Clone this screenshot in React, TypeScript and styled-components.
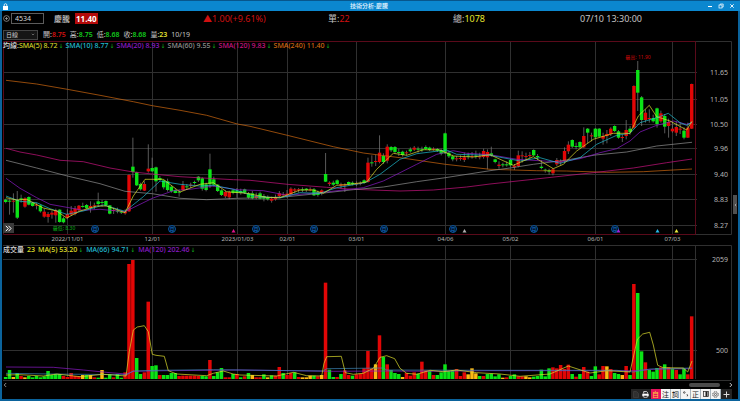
import React from 'react';
import styled, { createGlobalStyle } from 'styled-components';

const GlobalStyle = createGlobalStyle`
  * { box-sizing: border-box; }
  body { margin: 0; background: #000; }
  button, input, select { font: inherit; color: inherit; margin: 0; padding: 0; border: 0; background: none; }
`;

const colors = {
  up: '#e20606',
  down: '#0be416',
  flat: '#fdb813',
  wick: '#808080',
  grid: '#303030',
  frame: '#5a0a1a',
  yellow: '#e0e02c',
  cyan: '#20bcd0',
  purple: '#8d1bc9',
  gray: '#909090',
  pink: '#c81480',
  orange: '#d06810',
};

const Window = styled.main`
  display: flex;
  flex-direction: column;
  background: #000;
  border: 2px solid #0b639c;
  border-top: 1px solid #07568c;
  color: #c4c4c4;
  font: 7px/10px "Noto Sans", "Noto Sans CJK TC", sans-serif;
`;

const TitleBar = styled.header`
  display: grid;
  grid-template-columns: 1fr auto 1fr;
  align-items: center;
  height: 10px;
  margin: 0 -2px;
  padding: 0 5px 0 3px;
  background: #0b87cf;
  color: #e8f6ff;
  svg { display: block; }
`;

const Title = styled.h1`
  margin: 0;
  font-size: 6px;
  line-height: 10px;
  font-weight: 500;
`;

const WindowButtons = styled.div`
  display: flex;
  justify-content: flex-end;
  gap: 5px;
`;

const QuoteBar = styled.section`
  display: grid;
  grid-template-columns: 201fr 125fr 125fr 127fr 158fr;
  align-items: center;
  height: 15px;
  font-size: 9px;
  line-height: 12px;
  white-space: nowrap;
`;

const Symbol = styled.div`
  display: flex;
  align-items: center;
  padding-left: 1px;
`;

const IconButton = styled.button`
  display: grid;
  place-items: center;
  svg { display: block; }
`;

const CodeInput = styled.input`
  && {
    width: 33px;
    height: 11px;
    margin: 0 10px 0 1px;
    padding: 0 3px;
    border: 1px solid #5c5c5c;
    font-size: 7px;
    color: #d8d8d8;
  }
`;

const StockName = styled.span`
  font-size: 8px;
  font-weight: 500;
  margin-right: 5px;
`;

const LastPrice = styled.strong`
  padding: 0 1px;
  font-size: 8px;
  line-height: 11px;
  color: #fff;
  background: #b40a0a;
`;

const Value = styled.span<{ $color: string; $strong?: boolean }>`
  color: ${(p) => p.$color};
  font-weight: ${(p) => (p.$strong ? 600 : 400)};
`;

const DailyBar = styled.section`
  display: flex;
  align-items: center;
  gap: 4px;
  height: 15px;
  padding: 2px 1px 0;
  white-space: nowrap;
`;

const PeriodBox = styled.label`
  display: flex;
  align-items: center;
  width: 35px;
  height: 10px;
  margin-right: 1px;
  border: 1px solid #444;
  background: #151515;
  padding-right: 2px;
`;

const PeriodSelect = styled.select`
  && {
    flex: 1;
    appearance: none;
    padding-left: 2px;
    font-size: 6px;
    line-height: 8px;
    color: #ccc;
  }
`;

const Panel = styled.section`
  position: relative;
`;

const Plot = styled.svg`
  display: block;
  width: 100%;
  height: auto;
  font-family: "Noto Sans", "Noto Sans CJK TC", sans-serif;
`;

const Legend = styled.div<{ $gap: number }>`
  position: absolute;
  top: 0;
  left: 1px;
  display: flex;
  gap: ${(p) => p.$gap}px;
  line-height: 9px;
  font-weight: 500;
  white-space: nowrap;
`;

const LegendItem = styled.span<{ $color: string }>`
  color: ${(p) => p.$color};
`;

const Arrow = styled.span`
  color: #10b41c;
  margin-left: 1px;
  font-family: "DejaVu Sans", sans-serif;
  font-size: 6px;
`;

const ExpandButton = styled.button`
  && {
    position: absolute;
    left: 1px;
    bottom: 12px;
    width: 11px;
    height: 10px;
    display: grid;
    place-items: center;
    background: #3a3a3a;
    color: #fff;
  }
`;

const SideHandle = styled.button`
  && {
    position: absolute;
    right: 1px;
    top: 154px;
    width: 4px;
    height: 19px;
    background: #505050;
    color: #bbb;
    display: grid;
    place-items: center;
  }
`;

const ScrollRow = styled.div`
  display: flex;
  align-items: center;
  justify-content: space-between;
  height: 8px;
  padding: 0 5px 0 1px;
  color: #c0c0c0;
`;

const Track = styled.div`
  flex: 1;
  display: flex;
  justify-content: flex-end;
  padding-right: 9px;
`;

const Thumb = styled.div`
  width: 31px;
  height: 4px;
  border-radius: 2px;
  background: #4b4b4b;
`;

const Tools = styled.nav`
  display: flex;
  justify-content: flex-end;
  height: 10px;
  padding-right: 6px;
`;

const Tool = styled.button<{ $bg: string; $fg: string }>`
  && {
    display: grid;
    place-items: center;
    width: 10px;
    height: 10px;
    font-size: 7px;
    line-height: 9px;
    color: ${(p) => p.$fg};
    background: ${(p) => p.$bg};
    border-right: 1px solid ${(p) => (p.$bg === '#f4f4f4' ? '#a8b4bc' : p.$bg)};
    &:last-child { width: 11px; }
  }
  svg { display: block; }
`;

/* Chart data is kept in units of one third of a drawing unit. */
const U = 3;
const STEP = 11.562;
const px = (i: number) => (17.1 + STEP * i) / U;

const PRICE_TOP = 56;
const VOLUME_TOP = 240;
const VOLUME_BASE = 379;

/* direction, high, body top, body bottom, low */
const candles = `
g428,431,438,442 g430,434,437,476 r412,434,437,470 g405,432,485,489 g416,427,431,440 r424,427,452,455 g421,423,446,448 g438,441,450,452
r440,446,448,460 g446,448,466,470 r458,467,482,485 r468,474,483,500 r464,470,476,488 r458,462,478,500 g460,461,498,500 g482,487,499,502
r460,474,485,490 r450,464,476,480 r450,458,474,478 r447,449,463,466 g440,450,453,455 g444,447,457,459 r436,450,456,470 r440,448,450,460
g410,436,444,452 g432,438,440,452 g433,435,448,450 g447,448,473,475 r455,462,465,474 g455,464,467,472 g463,467,470,474 r460,466,472,476
r355,357,466,468 g245,332,348,365 g347,349,388,390 g380,384,400,404 r376,384,404,405 r265,338,346,350 g305,336,346,348 g332,334,376,407
g360,366,372,374 g371,373,394,400 g368,376,402,407 g388,392,406,410 g398,402,411,412 g400,407,410,422 r375,388,402,404 g384,391,394,402
r380,386,388,396 g374,378,381,386 g360,362,373,378 g364,367,398,404 g380,385,402,406 g293,340,385,396 g362,370,386,392 g384,386,405,408
g400,403,417,420 r404,408,421,426 r404,408,424,430 g400,403,411,415 g396,404,411,425 g398,405,411,416 g398,400,410,414 g408,412,425,428
g405,412,427,430 r410,420,426,430 g407,412,428,430 g414,420,428,436 g418,423,430,434 r422,428,434,440 r416,423,430,434 r405,412,420,424
r408,415,418,422 r402,413,418,425 r394,398,415,418 r396,400,404,412 r396,400,402,410 g394,400,402,408 g396,398,402,408 r394,400,402,406
g396,400,418,420 g404,408,417,422 r400,403,410,418 g291,354,377,378 r376,380,384,390 g374,380,386,390 g370,373,384,386 r380,385,389,398
r382,386,388,408 g376,378,385,388 g376,380,385,388 r376,382,384,390 r376,381,383,388 g370,373,380,383 r305,320,378,380 g298,319,321,332
r296,315,318,330 r238,290,318,322 g292,300,318,324 r265,272,314,322 g270,273,283,288 g270,273,288,292 g278,288,291,300 g284,287,297,302
r284,289,292,298 g274,280,286,290 r270,275,281,285 g272,278,280,290 g272,280,282,288 g268,273,279,282 g272,275,282,285 r274,278,281,284
g276,279,284,288 g278,282,293,298 g230,232,292,294 g286,290,301,306 g296,301,310,316 r300,307,310,316 r298,306,308,314 r290,304,312,318
g290,299,302,310 r288,300,303,308 g284,299,302,308 r290,301,303,310 r278,285,303,308 r280,288,304,340 g272,292,298,302 g308,310,318,322
r316,326,330,338 g320,325,328,334 g316,325,327,332 g308,312,328,332 r324,329,334,342 r284,298,330,334 r286,298,300,320 r290,300,302,314
r288,297,300,306 g280,282,298,300 g294,300,304,312 g312,332,336,340 g338,341,344,350 g338,342,347,356 r336,340,352,358 r306,312,325,330
r310,316,319,328 r274,285,315,322 r256,266,286,294 g250,252,272,276 g260,270,273,280 g256,258,274,278 r214,240,274,276 g216,218,230,262
r230,238,241,256 g216,218,244,248 g216,218,242,244 r230,240,248,266 r222,234,240,262 r214,218,234,240 g208,210,225,228 g222,226,245,248
r236,243,245,258 r192,222,240,250 g210,218,228,236 r88,90,215,218 g15,42,110,165 g120,124,192,210 r160,170,192,200 r160,186,188,200
g176,186,196,200 g155,157,204,215 r164,172,196,200 g174,180,212,232 r188,198,210,245 r198,218,226,230 r196,213,230,240 r200,218,220,234
g214,224,245,250 r200,215,245,246 r83,84,218,219`
  .trim()
  .split(/\s+/)
  .map((s) => {
    const [high, top, bottom, low] = s.slice(1).split(',').map(Number);
    return { up: s[0] === 'r', high, top, bottom, low };
  });

/* direction followed by bar height */
const volumes = `
g6 g27 y6 g18 r9 y5 g9 g5 g9 g5 g8 g24 g12 g15 g15 r9 r6 r18 r9 r8 y12 g12 y12 r5 g4 y27 g4 g15 r5 g15 g4 r20
r345 r357 g63 g15 r20 r232 g39 g41 r12 g12 g12 g18 g18 r9 r10 r10 r10 r10 r9 g9 g8 r57 g9 g20 g33 r5 r5 g15 r15 g5 r8 g18
y12 r5 r5 g14 y5 g11 r10 r36 g18 r12 r18 g20 r6 y5 y5 y10 g10 r8 y12 r289 g28 g6 r6 g15 r26 r12 g10 r14 r16 r32 r84 r32
y44 r131 g66 r44 g27 g18 g15 y6 r18 r10 r20 g16 r52 r26 g24 r12 g12 g20 g44 g24 g26 r30 r9 r20 y14 y32 y17 g9 r9 g15 g16 g8
g14 y4 r5 g9 g14 r8 r8 y8 y5 g7 g9 g28 g8 g32 r35 r32 r42 r30 r43 g15 r7 g15 r36 r22 g9 g38 r14 r39 y38 r30 g18 g15
y12 r39 g12 r285 g258 g83 r50 g27 g22 g33 r35 g44 r35 g30 r27 g14 g32 r14 r188`
  .trim()
  .split(/\s+/)
  .map((s) => ({ kind: s[0], size: Number(s.slice(1)) }));

const volumeColor: Record<string, string> = { r: colors.up, g: colors.down, y: colors.flat };

const priceLines = [
  { color: colors.orange, pts: '18,73 110,84 202,100 300,118 400,137 457,149 540,163 620,178 712,204 750,211 862,238 1000,272 1090,291 1200,305 1336,325 1470,340 1610,344 1700,345 1820,349 1930,347 2020,342 2076,339' },
  { color: colors.pink, pts: '18,277 60,288 110,297 180,313 250,317 330,336 400,348 457,354 540,362 700,371 750,373 862,385 980,394 1060,400 1200,405 1300,402 1400,393 1470,384 1600,370 1790,349 1900,336 2000,320 2076,309' },
  { color: colors.gray, pts: '18,313 110,336 202,360 300,383 375,406 457,413 540,427 620,431 712,427 800,425 862,422 980,410 1060,401 1150,393 1250,377 1336,365 1470,344 1530,336 1600,325 1700,312 1786,297 1880,288 1970,270 2076,259' },
  { color: colors.purple, pts: '18,367 60,397 110,425 150,445 250,463 300,460 375,467 457,427 520,404 570,400 640,390 712,401 790,404 862,418 960,410 1090,395 1150,375 1200,350 1250,325 1310,295 1360,284 1400,292 1470,296 1550,310 1680,318 1740,308 1800,290 1850,278 1890,255 1920,228 1970,208 2020,195 2060,205 2076,200' },
  { color: colors.cyan, pts: '18,420 60,436 110,440 150,458 200,475 250,465 310,447 375,466 430,422 480,375 540,385 600,390 640,388 700,400 760,420 840,426 900,410 960,412 1010,395 1095,380 1140,355 1200,310 1250,293 1340,282 1370,295 1470,298 1560,315 1620,305 1680,322 1740,305 1790,265 1850,238 1890,232 1920,200 1970,185 2005,172 2040,200 2060,208 2076,198' },
  { color: colors.yellow, pts: '18,425 50,432 80,430 130,456 170,465 200,486 240,465 290,450 320,450 375,470 400,420 435,370 490,370 540,408 600,385 640,380 680,407 740,412 800,424 840,425 900,402 940,402 970,412 1010,388 1050,385 1100,378 1130,340 1180,292 1220,298 1270,281 1320,282 1360,300 1420,303 1470,296 1540,328 1600,302 1660,338 1690,325 1730,285 1780,250 1840,232 1890,232 1915,180 1948,148 1970,182 2010,195 2060,222 2076,196' },
];

const volumeLines = [
  { color: colors.purple, pts: '18,381 160,382 250,390 330,398 380,402 400,394 500,392 720,390 1000,394 1150,393 1300,394 1470,392 1900,392 1960,388 2076,386' },
  { color: '#3d86b8', pts: '18,400 150,402 380,404 400,393 470,391 640,389 720,390 970,393 980,386 1150,384 1160,390 1470,391 1850,391 1900,396 1950,387 2076,384' },
  { color: colors.yellow, pts: '18,405 60,404 130,408 170,402 240,410 310,403 378,408 388,335 400,270 412,261 433,257 445,275 457,343 468,346 493,349 505,392 530,402 620,407 640,400 670,393 700,402 720,405 830,408 880,397 920,407 965,408 972,370 980,350 1024,349 1036,398 1060,403 1090,400 1120,385 1140,352 1160,347 1184,356 1200,385 1220,400 1250,403 1290,391 1330,395 1370,390 1430,398 1500,402 1560,409 1650,402 1705,378 1770,399 1820,392 1890,396 1912,298 1928,282 1949,277 1960,315 1973,376 1990,383 2050,384 2063,396 2076,363' },
];

const toPoints = (pts: string, top: number) =>
  pts
    .split(' ')
    .map((p) => {
      const [x, y] = p.split(',').map(Number);
      return `${(x / U).toFixed(1)},${(top + y / U).toFixed(1)}`;
    })
    .join(' ');

const dates = [
  { x: 67.5, text: '2022/11/01' },
  { x: 152.5, text: '12/01' },
  { x: 237.5, text: '2023/01/03' },
  { x: 287.5, text: '02/01' },
  { x: 356.5, text: '03/01' },
  { x: 445.5, text: '04/06' },
  { x: 510.5, text: '05/02' },
  { x: 595.5, text: '06/01' },
  { x: 672.5, text: '07/03' },
];

const prices = [
  { y: 72.5, text: '11.65' },
  { y: 99.5, text: '11.05' },
  { y: 124.5, text: '10.50' },
  { y: 148.5, text: '9.96' },
  { y: 174.5, text: '9.40' },
  { y: 199.5, text: '8.83' },
  { y: 225.5, text: '8.27' },
];

const months = [95, 172, 256, 314, 384, 453, 534, 615];
const flags = [
  { x: 233.5, color: '#e0148c' },
  { x: 464.5, color: '#b0b0b0' },
  { x: 618.5, color: '#a020e0' },
  { x: 657.5, color: '#28b8e8' },
  { x: 676.5, color: '#e8e83c' },
];

function PriceChart() {
  return (
    <Plot viewBox="2 41 736 204" role="img" aria-label="日線 K線圖">
      <g stroke={colors.grid} fill="none">
        {dates.map((d) => <path key={d.text} d={`M${d.x} 41V234`} />)}
        {prices.map((p) => <path key={p.text} d={`M3 ${p.y}H697`} />)}
        <path d="M695 41.5H731.5V234.5H695" />
      </g>
      <path d="M3.5 41.5H695.5V234.5H3.5Z" stroke={colors.frame} fill="none" />
      {months.map((x) => (
        <g key={x}>
          <circle cx={x} cy={229} r={3.5} fill="#001226" stroke="#0a559c" />
          <text x={x} y={231} fontSize={5} textAnchor="middle" fill="#1677d2">月</text>
        </g>
      ))}
      {flags.map((f) => <path key={f.x} d={`M${f.x - 2} 232.5h4l-2 -3.5z`} fill={f.color} />)}
      {candles.map((c, i) => (
        <g key={i}>
          <path d={`M${px(i)} ${PRICE_TOP + c.high / U}V${PRICE_TOP + c.low / U}`} stroke={colors.wick} strokeWidth={0.7} />
          <rect
            x={px(i) - 1.7}
            y={PRICE_TOP + c.top / U}
            width={3.4}
            height={Math.max(1, (c.bottom - c.top) / U)}
            fill={c.up ? colors.up : colors.down}
          />
        </g>
      ))}
      {priceLines.map((l) => (
        <polyline key={l.color} points={toPoints(l.pts, PRICE_TOP)} fill="none" stroke={l.color} strokeWidth={0.7} strokeLinejoin="round" />
      ))}
      <text x={638} y={59} fontSize={5} textAnchor="middle" fill="#c80808">最高: 11.90</text>
      <text x={64} y={229.5} fontSize={5} textAnchor="middle" fill="#0ca818">最低: 8.30</text>
      <g fontSize={7} fill="#b4b4b4" textAnchor="end">
        {prices.map((p) => <text key={p.text} x={728} y={p.y + 2.5}>{p.text}</text>)}
      </g>
      <g fontSize={6} fill="#b4b4b4" textAnchor="middle">
        {dates.map((d) => <text key={d.text} x={d.x} y={241}>{d.text}</text>)}
      </g>
    </Plot>
  );
}

function VolumeChart() {
  return (
    <Plot viewBox="2 245 736 136" role="img" aria-label="成交量圖">
      <g stroke={colors.grid} fill="none">
        {dates.map((d) => <path key={d.text} d={`M${d.x} 245V379`} />)}
        <path d="M3 259.5H697M3 350.5H697M695.5 245V379" />
        <path d="M3 245.5H731.5V380.5H3" />
      </g>
      {volumes.map((v, i) => (
        <rect key={i} x={px(i) - 1.8} y={VOLUME_BASE - v.size / U} width={3.5} height={v.size / U} fill={volumeColor[v.kind]} />
      ))}
      {volumeLines.map((l) => (
        <polyline key={l.color} points={toPoints(l.pts, VOLUME_TOP)} fill="none" stroke={l.color} strokeWidth={0.7} strokeLinejoin="round" />
      ))}
      <g fontSize={7} fill="#b4b4b4" textAnchor="end">
        <text x={728} y={262}>2059</text>
        <text x={728} y={353}>500</text>
      </g>
    </Plot>
  );
}

const daily = [
  { label: '開', value: '8.75', color: '#d01010' },
  { label: '高', value: '8.75', color: '#12c81c' },
  { label: '低', value: '8.68', color: '#12c81c' },
  { label: '收', value: '8.68', color: '#12c81c' },
  { label: '量', value: '23', color: '#e0e030' },
];

const smaLegend = [
  { text: 'SMA(10) 8.77', color: colors.cyan },
  { text: 'SMA(20) 8.93', color: colors.purple },
  { text: 'SMA(60) 9.55', color: colors.gray },
  { text: 'SMA(120) 9.83', color: colors.pink },
  { text: 'SMA(240) 11.40', color: colors.orange },
];

const volumeLegend = [
  { text: 'MA(5) 53.20', color: colors.yellow },
  { text: 'MA(66) 94.71', color: colors.cyan },
  { text: 'MA(120) 202.46', color: colors.purple },
];

export default function App() {
  return (
    <>
      <GlobalStyle />
      <Window>
        <TitleBar>
          <svg width="5" height="7" viewBox="0 0 5 7">
            <path d="M1.2 3V2a1.3 1.3 0 0 1 2.6 0v1" fill="none" stroke="#fff" strokeWidth=".8" />
            <rect y="3" width="5" height="4" fill="#fff" />
          </svg>
          <Title>技術分析-慶騰</Title>
          <WindowButtons>
            <IconButton aria-label="最小化"><svg width="6" height="6" viewBox="0 0 6 6"><path d="M1 3.5h4" stroke="#fff" /></svg></IconButton>
            <IconButton aria-label="還原"><svg width="6" height="6" viewBox="0 0 6 6" fill="none" stroke="#fff" strokeWidth=".7"><rect x="1" y="2" width="3" height="3" /><path d="M2.2 2V1h3v3H4" /></svg></IconButton>
            <IconButton aria-label="關閉"><svg width="6" height="6" viewBox="0 0 6 6"><path d="M1.3 1.3l3.4 3.4M4.7 1.3L1.3 4.7" stroke="#fff" strokeWidth=".9" /></svg></IconButton>
          </WindowButtons>
        </TitleBar>

        <QuoteBar>
          <Symbol>
            <IconButton aria-label="查詢">
              <svg width="7" height="7" viewBox="0 0 7 7" fill="none" stroke="#aaa" strokeWidth=".7">
                <circle cx="3.5" cy="3.5" r="2.9" /><path d="M2 3.5h3M3.5 2v3" />
              </svg>
            </IconButton>
            <CodeInput aria-label="股票代號" defaultValue="4534" />
            <StockName>慶騰</StockName>
            <LastPrice>11.40</LastPrice>
          </Symbol>
          <Value $color="#d01010">▲1.00(+9.61%)</Value>
          <span>單:<Value $color="#d01010">22</Value></span>
          <span>總:<Value $color="#e6e62e">1078</Value></span>
          <time>07/10 13:30:00</time>
        </QuoteBar>

        <DailyBar>
          <PeriodBox>
            <PeriodSelect aria-label="週期" defaultValue="日線">
              <option>日線</option>
            </PeriodSelect>
            <svg width="4" height="3" viewBox="0 0 4 3"><path d="M.8.8L2 2 3.2.8" fill="none" stroke="#888" strokeWidth=".7" /></svg>
          </PeriodBox>
          {daily.map((d) => (
            <span key={d.label}>{d.label}:<Value $color={d.color} $strong>{d.value}</Value></span>
          ))}
          <span>10/19</span>
        </DailyBar>

        <Panel>
          <PriceChart />
          <Legend $gap={2}>
            <LegendItem $color="#d8d8d8">
              均線:<Value $color={colors.yellow}>SMA(5) 8.72</Value><Arrow>↓</Arrow>
            </LegendItem>
            {smaLegend.map((l) => (
              <LegendItem key={l.text} $color={l.color}>{l.text}<Arrow>↓</Arrow></LegendItem>
            ))}
          </Legend>
          <ExpandButton aria-label="展開">
            <svg width="7" height="7" viewBox="0 0 7 7"><path d="M.8.8L3.3 3.5.8 6.2M3.5.8L6 3.5 3.5 6.2" fill="none" stroke="#fff" /></svg>
          </ExpandButton>
          <SideHandle aria-label="側欄">
            <svg width="3" height="4" viewBox="0 0 3 4"><path d="M2.2.8L1 2l1.2 1.2" fill="none" stroke="#ccc" strokeWidth=".6" /></svg>
          </SideHandle>
        </Panel>

        <Panel>
          <VolumeChart />
          <Legend $gap={3}>
            <LegendItem $color="#d8d8d8">成交量</LegendItem>
            <LegendItem $color={colors.yellow}>23</LegendItem>
            {volumeLegend.map((l) => (
              <LegendItem key={l.text} $color={l.color}>{l.text}<Arrow>↓</Arrow></LegendItem>
            ))}
          </Legend>
        </Panel>

        <ScrollRow>
          <IconButton aria-label="向左"><svg width="4" height="6" viewBox="0 0 4 6"><path d="M3.2 1L1.2 3l2 2" fill="none" stroke="#b0b0b0" strokeWidth=".8" /></svg></IconButton>
          <Track><Thumb /></Track>
          <IconButton aria-label="向右"><svg width="4" height="6" viewBox="0 0 4 6"><path d="M.8 1l2 2-2 2" fill="none" stroke="#ddd" strokeWidth=".9" /></svg></IconButton>
        </ScrollRow>

        <Tools>
          <Tool $bg="#242424" $fg="#555" aria-label="文件"><svg width="6" height="7" viewBox="0 0 6 7"><path d="M.5.5h3l2 2v4h-5z" fill="#303030" stroke="#444" strokeWidth=".6" /></svg></Tool>
          <Tool $bg="#242424" $fg="#fff" aria-label="列印"><svg width="7" height="7" viewBox="0 0 7 7"><path d="M1.7 2.5V.6h3l.8.8v1.1" fill="none" stroke="#fff" strokeWidth=".8" /><path d="M.3 2.7h6.4v2.6H.3z" fill="#fff" /><path d="M1.8 4.4h3.4v2H1.8z" fill="#222" stroke="#fff" strokeWidth=".6" /></svg></Tool>
          <Tool $bg="#e5125c" $fg="#ffd23c">自</Tool>
          <Tool $bg="#f4f4f4" $fg="#222">注</Tool>
          <Tool $bg="#f4f4f4" $fg="#222">詞</Tool>
          <Tool $bg="#f4f4f4" $fg="#222" aria-label="標點"><svg width="6" height="6" viewBox="0 0 6 6"><circle cx="1.3" cy="1.5" r=".8" fill="none" stroke="#222" strokeWidth=".7" /><path d="M4 3.3q1 .7.2 2" fill="none" stroke="#222" strokeWidth=".9" /></svg></Tool>
          <Tool $bg="#f4f4f4" $fg="#222">正</Tool>
          <Tool $bg="#f4f4f4" $fg="#222" aria-label="全半形"><svg width="6" height="6" viewBox="0 0 6 6"><rect x=".5" y=".5" width="5" height="5" fill="none" stroke="#222" strokeWidth=".7" /><path d="M2.5.5h2v5h-2z" fill="#222" /></svg></Tool>
          <Tool $bg="#f4f4f4" $fg="#222" aria-label="設定"><svg width="7" height="7" viewBox="0 0 7 7" fill="none" stroke="#333"><circle cx="3.5" cy="3.5" r="2.7" strokeWidth=".9" strokeDasharray="1.4 .7" /><circle cx="3.5" cy="3.5" r="1.1" strokeWidth=".7" /></svg></Tool>
          <Tool $bg="#242424" $fg="#fff" aria-label="新增"><svg width="7" height="7" viewBox="0 0 7 7"><path d="M.5 3.5h6M3.5.5v6" stroke="#ddd" /></svg></Tool>
        </Tools>
      </Window>
    </>
  );
}
